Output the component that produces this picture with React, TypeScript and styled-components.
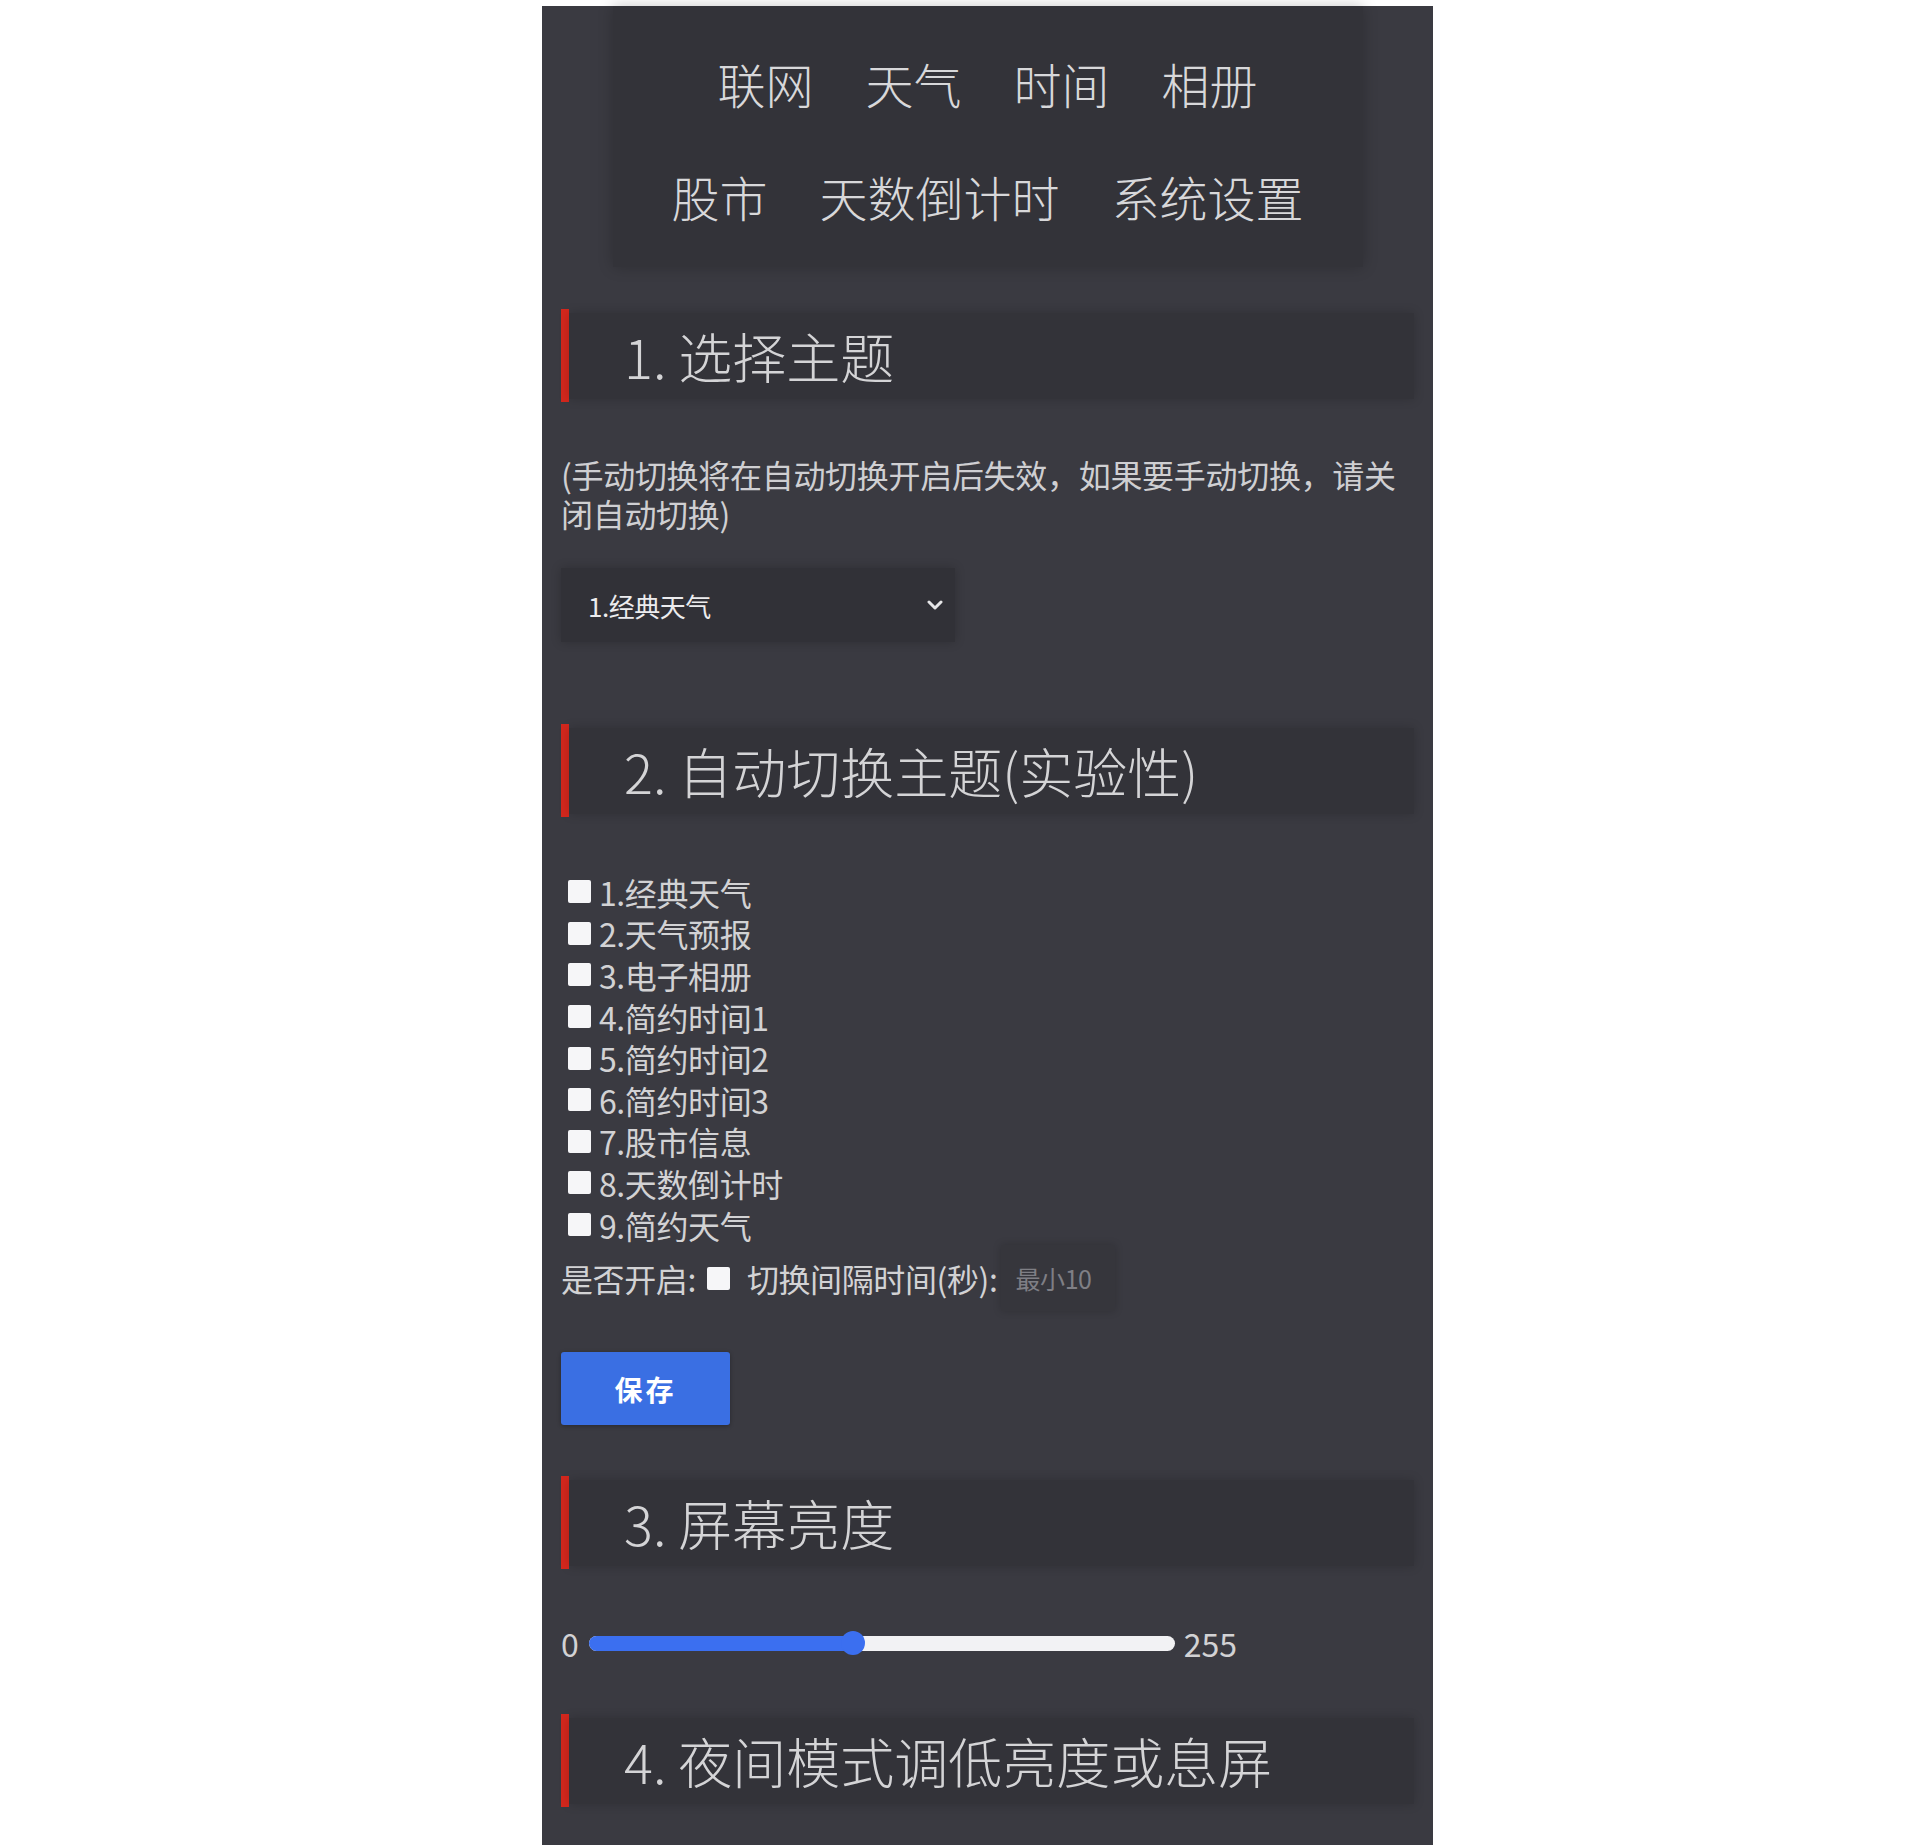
import React from "react";
import styled, { createGlobalStyle } from "styled-components";

const Global = createGlobalStyle`
  html, body { margin: 0; padding: 0; background: #ffffff; }
  body { font-family: "Noto Sans CJK SC", "Noto Sans", sans-serif; }
`;

const Panel = styled.div`
  width: 891px;
  margin: 6px 0 0 542px;
  box-sizing: border-box;
  padding: 0 19px 60px;
  background: #3a3a41;
  color: #d6d6d8;
  display: flex;
  flex-direction: column;
`;

const Nav = styled.nav`
  width: 750px;
  align-self: center;
  box-sizing: border-box;
  padding: 47px 50px 41px;
  background: #333339;
  box-shadow: 0 0 14px rgba(0, 0, 0, 0.22);
  display: flex;
  flex-wrap: wrap;
  justify-content: center;
  column-gap: 52px;
  row-gap: 53px;
`;

const NavItem = styled.a`
  font-size: 48px;
  font-weight: 300;
  line-height: 60px;
  color: #d8d8da;
  text-decoration: none;
`;

const SectionHeader = styled.div<{ $mt: number }>`
  margin-top: ${(p) => p.$mt}px;
  display: flex;
  align-items: center;
`;

const RedBar = styled.span`
  width: 8px;
  height: 93px;
  background: #d3271d;
  flex: none;
`;

const HeaderBox = styled.h2`
  flex: 1;
  margin: 0;
  height: 86px;
  display: flex;
  align-items: center;
  padding-left: 55px;
  background: #333339;
  box-shadow: 0 0 10px rgba(0, 0, 0, 0.18);
  font-size: 54px;
  font-weight: 300;
  color: #d4d4d6;
  white-space: nowrap;
`;

const Note = styled.p`
  margin: 53px 0 0;
  font-size: 32px;
  line-height: 39px;
  color: #cfcfd2;
  letter-spacing: -0.3px;
`;

const SelectBox = styled.div`
  margin-top: 35px;
  width: 394px;
  height: 74px;
  box-sizing: border-box;
  padding: 0 12px 0 27px;
  background: #313137;
  box-shadow: 0 0 10px rgba(0, 0, 0, 0.2);
  display: flex;
  align-items: center;
  justify-content: space-between;
  font-size: 26px;
  font-weight: 400;
  color: #ececee;
  letter-spacing: -0.5px;
`;

const CheckList = styled.div`
  margin-top: 54px;
  display: flex;
  flex-direction: column;
`;

const CheckRow = styled.label`
  height: 41.6px;
  display: flex;
  align-items: center;
  font-size: 32px;
  color: #d2d2d4;
  letter-spacing: -0.4px;
`;

const Box = styled.span<{ $ml?: number }>`
  width: 23px;
  height: 23px;
  margin-left: ${(p) => p.$ml ?? 7}px;
  margin-right: 8px;
  background: #f6f6f8;
  border-radius: 2px;
  flex: none;
`;

const OptionRow = styled.div`
  height: 66px;
  display: flex;
  align-items: center;
  font-size: 32px;
  color: #d2d2d4;
  letter-spacing: -0.4px;
`;

const OptionLabel = styled.span<{ $ml?: number }>`
  margin-left: ${(p) => p.$ml ?? 0}px;
`;

const SecInput = styled.div`
  margin-left: 4px;
  width: 114px;
  height: 66px;
  box-sizing: border-box;
  padding-left: 14px;
  background: #36363c;
  box-shadow: 0 0 8px rgba(0, 0, 0, 0.18);
  display: flex;
  align-items: center;
  font-size: 25px;
  color: #7f7f85;
  overflow: hidden;
  white-space: nowrap;
`;

const SaveButton = styled.button`
  margin-top: 41px;
  width: 169px;
  height: 73px;
  border: none;
  border-radius: 3px;
  background: #3a6fe3;
  color: #ffffff;
  font-family: "Noto Sans CJK SC", sans-serif;
  font-size: 28px;
  font-weight: 700;
  letter-spacing: 3px;
  align-self: flex-start;
  box-shadow: 0 1px 4px rgba(0, 0, 0, 0.3);
`;

const SliderRow = styled.div`
  margin-top: 54px;
  height: 40px;
  display: flex;
  align-items: center;
  font-size: 32px;
  color: #d2d2d4;
`;

const Track = styled.div`
  position: relative;
  width: 586px;
  height: 15px;
  margin: 0 9px 0 10px;
  border-radius: 8px;
  background: #f2f2f4;
`;

const Fill = styled.div`
  position: absolute;
  left: 0;
  top: 0;
  bottom: 0;
  border-radius: 8px 0 0 8px;
  background: #3b6ff0;
`;

const Thumb = styled.div`
  position: absolute;
  top: 50%;
  width: 24px;
  height: 24px;
  margin: -12px 0 0 -12px;
  border-radius: 50%;
  background: #3b6ff0;
`;

const Chevron = () => (
  <svg width="16" height="12" viewBox="0 0 16 12" fill="none">
    <path d="M2 3 L8 9 L14 3" stroke="#e6e6e8" strokeWidth="3" strokeLinecap="round" strokeLinejoin="round" />
  </svg>
);

const themes = [
  "1.经典天气",
  "2.天气预报",
  "3.电子相册",
  "4.简约时间1",
  "5.简约时间2",
  "6.简约时间3",
  "7.股市信息",
  "8.天数倒计时",
  "9.简约天气",
];

export default function App() {
  const value = 115;
  const pct = (value / 255) * 100;
  return (
    <>
      <Global />
      <Panel>
        <Nav>
          {["联网", "天气", "时间", "相册", "股市", "天数倒计时", "系统设置"].map((t) => (
            <NavItem key={t}>{t}</NavItem>
          ))}
        </Nav>

        <SectionHeader $mt={42}>
          <RedBar />
          <HeaderBox>1. 选择主题</HeaderBox>
        </SectionHeader>
        <Note>(手动切换将在自动切换开启后失效，如果要手动切换，请关闭自动切换)</Note>
        <SelectBox>
          <span>1.经典天气</span>
          <Chevron />
        </SelectBox>

        <SectionHeader $mt={82}>
          <RedBar />
          <HeaderBox>2. 自动切换主题(实验性)</HeaderBox>
        </SectionHeader>
        <CheckList>
          {themes.map((t) => (
            <CheckRow key={t}>
              <Box />
              {t}
            </CheckRow>
          ))}
        </CheckList>
        <OptionRow>
          <OptionLabel>是否开启:</OptionLabel>
          <Box $ml={11} />
          <OptionLabel $ml={9}>切换间隔时间(秒):</OptionLabel>
          <SecInput>最小10</SecInput>
        </OptionRow>
        <SaveButton>保存</SaveButton>

        <SectionHeader $mt={51}>
          <RedBar />
          <HeaderBox>3. 屏幕亮度</HeaderBox>
        </SectionHeader>
        <SliderRow>
          <span>0</span>
          <Track>
            <Fill style={{ width: `${pct}%` }} />
            <Thumb style={{ left: `${pct}%` }} />
          </Track>
          <span>255</span>
        </SliderRow>

        <SectionHeader $mt={51}>
          <RedBar />
          <HeaderBox>4. 夜间模式调低亮度或息屏</HeaderBox>
        </SectionHeader>
      </Panel>
    </>
  );
}
